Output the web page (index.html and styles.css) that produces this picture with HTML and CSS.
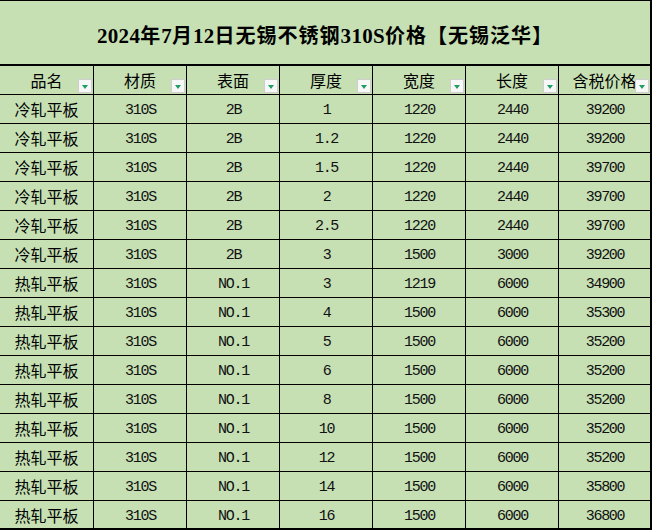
FILE: index.html
```html
<!DOCTYPE html>
<html lang="zh">
<head>
<meta charset="utf-8">
<title>2024年7月12日无锡不锈钢310S价格</title>
<link rel="stylesheet" href="styles.css">
</head>
<body>
<div class="sheet">
  <div class="title"><span class="tt"><span class="tn">2024</span>年<span class="tn">7</span>月<span class="tn">12</span>日无锡不锈钢<span class="tn">310S</span>价格【无锡泛华】</span></div>
  <div class="row head">
    <div class="cell">品名<span class="flt"></span></div>
    <div class="cell">材质<span class="flt"></span></div>
    <div class="cell">表面<span class="flt"></span></div>
    <div class="cell">厚度<span class="flt"></span></div>
    <div class="cell">宽度<span class="flt"></span></div>
    <div class="cell">长度<span class="flt"></span></div>
    <div class="cell">含税价格<span class="flt"></span></div>
  </div>
  <div class="row"><div class="cell">冷轧平板</div><div class="cell num">310S</div><div class="cell num">2B</div><div class="cell num">1</div><div class="cell num">1220</div><div class="cell num">2440</div><div class="cell num">39200</div></div>
  <div class="row"><div class="cell">冷轧平板</div><div class="cell num">310S</div><div class="cell num">2B</div><div class="cell num">1.2</div><div class="cell num">1220</div><div class="cell num">2440</div><div class="cell num">39200</div></div>
  <div class="row"><div class="cell">冷轧平板</div><div class="cell num">310S</div><div class="cell num">2B</div><div class="cell num">1.5</div><div class="cell num">1220</div><div class="cell num">2440</div><div class="cell num">39700</div></div>
  <div class="row"><div class="cell">冷轧平板</div><div class="cell num">310S</div><div class="cell num">2B</div><div class="cell num">2</div><div class="cell num">1220</div><div class="cell num">2440</div><div class="cell num">39700</div></div>
  <div class="row"><div class="cell">冷轧平板</div><div class="cell num">310S</div><div class="cell num">2B</div><div class="cell num">2.5</div><div class="cell num">1220</div><div class="cell num">2440</div><div class="cell num">39700</div></div>
  <div class="row"><div class="cell">冷轧平板</div><div class="cell num">310S</div><div class="cell num">2B</div><div class="cell num">3</div><div class="cell num">1500</div><div class="cell num">3000</div><div class="cell num">39200</div></div>
  <div class="row"><div class="cell">热轧平板</div><div class="cell num">310S</div><div class="cell num">NO.1</div><div class="cell num">3</div><div class="cell num">1219</div><div class="cell num">6000</div><div class="cell num">34900</div></div>
  <div class="row"><div class="cell">热轧平板</div><div class="cell num">310S</div><div class="cell num">NO.1</div><div class="cell num">4</div><div class="cell num">1500</div><div class="cell num">6000</div><div class="cell num">35300</div></div>
  <div class="row"><div class="cell">热轧平板</div><div class="cell num">310S</div><div class="cell num">NO.1</div><div class="cell num">5</div><div class="cell num">1500</div><div class="cell num">6000</div><div class="cell num">35200</div></div>
  <div class="row"><div class="cell">热轧平板</div><div class="cell num">310S</div><div class="cell num">NO.1</div><div class="cell num">6</div><div class="cell num">1500</div><div class="cell num">6000</div><div class="cell num">35200</div></div>
  <div class="row"><div class="cell">热轧平板</div><div class="cell num">310S</div><div class="cell num">NO.1</div><div class="cell num">8</div><div class="cell num">1500</div><div class="cell num">6000</div><div class="cell num">35200</div></div>
  <div class="row"><div class="cell">热轧平板</div><div class="cell num">310S</div><div class="cell num">NO.1</div><div class="cell num">10</div><div class="cell num">1500</div><div class="cell num">6000</div><div class="cell num">35200</div></div>
  <div class="row"><div class="cell">热轧平板</div><div class="cell num">310S</div><div class="cell num">NO.1</div><div class="cell num">12</div><div class="cell num">1500</div><div class="cell num">6000</div><div class="cell num">35200</div></div>
  <div class="row"><div class="cell">热轧平板</div><div class="cell num">310S</div><div class="cell num">NO.1</div><div class="cell num">14</div><div class="cell num">1500</div><div class="cell num">6000</div><div class="cell num">35800</div></div>
  <div class="row last"><div class="cell">热轧平板</div><div class="cell num">310S</div><div class="cell num">NO.1</div><div class="cell num">16</div><div class="cell num">1500</div><div class="cell num">6000</div><div class="cell num">36800</div></div>
</div>
</body>
</html>
```
FILE: styles.css
```css
* { box-sizing: border-box; }
html, body { margin: 0; padding: 0; background: #ffffff; }
.sheet {
  width: 652px;
  height: 530px;
  background: #c6e0b4;
  border-top: 1px solid #000;
  border-right: 2px solid #000;
  border-bottom: 2px solid #000;
  font-family: "Noto Sans CJK SC", sans-serif;
  color: #000;
}
.title {
  height: 65px;
  border-bottom: 2px solid #000;
  display: flex;
  align-items: center;
  justify-content: center;
  padding-top: 3px;
}
.tt {
  font-family: "Noto Sans CJK SC", sans-serif;
  font-weight: 700;
  font-size: 20px;
  letter-spacing: 1px;
}
.tn {
  font-family: "Liberation Serif", serif;
  font-weight: 700;
  font-size: 21px;
  letter-spacing: 0.3px;
}
.row {
  display: grid;
  grid-template-columns: 94px 93px 93px 93px 93px 93px 91px;
  height: 29px;
}
.row.last { height: 28px; }
.cell {
  position: relative;
  display: flex;
  align-items: center;
  justify-content: center;
  border-right: 1px solid #000;
  border-bottom: 1px solid #000;
  font-size: 16px;
  line-height: 1;
  white-space: nowrap;
}
.cell:last-child { border-right: none; }
.row.last .cell { border-bottom: none; }
.num {
  font-family: "Liberation Mono", monospace;
  font-size: 15px;
  letter-spacing: -1.3px;
  padding-left: 1px;
  padding-top: 3px;
  color: #111;
}
.flt {
  position: absolute;
  right: 1px;
  bottom: 1px;
  width: 14px;
  height: 14px;
  background: #f7f7f7;
  border: 1px solid #cfcfcf;
}
.flt::after {
  content: "";
  position: absolute;
  left: 3px;
  top: 5px;
  border-left: 3.5px solid transparent;
  border-right: 3.5px solid transparent;
  border-top: 4px solid #1f9e62;
}
```
